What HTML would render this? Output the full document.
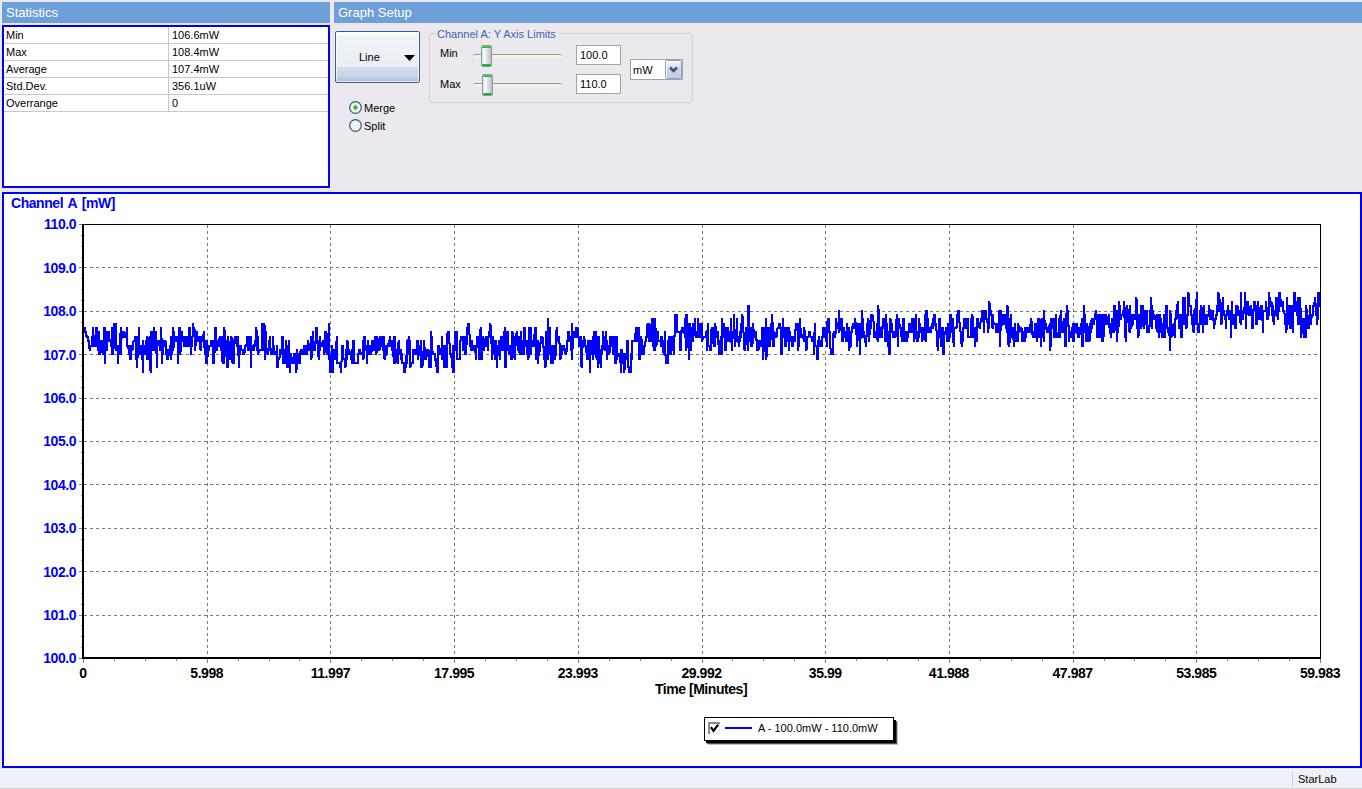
<!DOCTYPE html>
<html><head><meta charset="utf-8">
<style>
*{margin:0;padding:0;box-sizing:border-box}
html,body{width:1362px;height:789px;overflow:hidden;background:#ebe9ed;font-family:"Liberation Sans",sans-serif;position:relative}
.abs{position:absolute}
.hdr{position:absolute;top:2px;height:21px;background:#6d9fd8;color:#fff;font-size:13px;line-height:21px;padding-left:4px;white-space:nowrap}
.cream{position:absolute;background:#fbf8ee}
.stats{position:absolute;left:2px;top:25px;width:328px;height:163px;border:2px solid #0000ff;background:#fff}
.row{position:absolute;left:0;width:324px;height:17px;border-bottom:1px solid #c8c8c8;font-size:11px;color:#000}
.row span{position:absolute;top:2px;white-space:nowrap}
.vsep{position:absolute;left:164px;top:0;width:1px;height:84px;background:#c8c8c8}
.txt{position:absolute;white-space:nowrap;font-size:11px;color:#000;line-height:13px}
.chart{position:absolute;left:2px;top:192px;width:1360px;height:576px;border:2px solid #0000ff;background:#fff}
.status{position:absolute;left:0;top:768px;width:1362px;height:21px;background:#eef1f7;border-top:1px solid #e9ebe3}
</style></head><body>
<!-- cream outlines -->
<div class="hdr" style="left:2px;width:328px">Statistics</div>
<div class="hdr" style="left:334px;width:1028px">Graph Setup</div>

<div class="stats">
  <div class="row" style="top:0"><span style="left:2px">Min</span><span style="left:168px">106.6mW</span></div>
  <div class="row" style="top:17px"><span style="left:2px">Max</span><span style="left:168px">108.4mW</span></div>
  <div class="row" style="top:34px"><span style="left:2px">Average</span><span style="left:168px">107.4mW</span></div>
  <div class="row" style="top:51px"><span style="left:2px">Std.Dev.</span><span style="left:168px">356.1uW</span></div>
  <div class="row" style="top:68px"><span style="left:2px">Overrange</span><span style="left:168px">0</span></div>
  <div class="vsep"></div>
</div>

<!-- Graph setup controls -->
<div class="abs" style="left:335px;top:31px;width:85px;height:52px;border:1px solid #3b5e8e;border-radius:2px;box-shadow:inset 0 0 0 1px rgba(255,255,255,0.7);background:linear-gradient(#ffffff 0%,#f0f4f8 10%,#e8eef5 70%,#d2ddeb 71%,#c8d5e6 88%,#a9bcd6 100%)"></div>
<div class="txt" style="left:359px;top:51px">Line</div>
<svg class="abs" style="left:404px;top:55px" width="11" height="6"><path d="M0 0H11L5.5 6Z" fill="#000"/></svg>

<!-- radios -->
<svg class="abs" style="left:349px;top:101px" width="13" height="13"><circle cx="6.5" cy="6.5" r="5.8" fill="#f4f4f0" stroke="#2a5a8c" stroke-width="1.2"/><path d="M6.5 3.8L9.2 6.5L6.5 9.2L3.8 6.5Z" fill="#34b834"/></svg>
<div class="txt" style="left:364px;top:102px">Merge</div>
<svg class="abs" style="left:349px;top:119px" width="13" height="13"><circle cx="6.5" cy="6.5" r="5.8" fill="#f1f1ee" stroke="#2a5a8c" stroke-width="1.2"/></svg>
<div class="txt" style="left:364px;top:120px">Split</div>

<!-- group box -->
<div class="abs" style="left:429px;top:33px;width:264px;height:70px;border:1px solid #d3d1d6;border-radius:3px"></div>
<div class="txt" style="left:435px;top:28px;background:#ebe9ed;color:#3c64b4;padding:0 2px">Channel A: Y Axis Limits</div>
<div class="txt" style="left:440px;top:47px">Min</div>
<div class="txt" style="left:440px;top:78px">Max</div>
<!-- slider tracks -->
<div class="abs" style="left:473px;top:54px;width:89px;height:4px;border-top:1px solid #9d9b90;background:#f4f2e6;border-radius:2px"></div>
<div class="abs" style="left:473px;top:83px;width:89px;height:4px;border-top:1px solid #9d9b90;background:#f4f2e6;border-radius:2px"></div>
<div class="abs" style="left:481px;top:45px;width:11px;height:22px;border:1px solid #8a9aac;border-radius:2px;background:linear-gradient(90deg,#d8dae4 0%,#ffffff 25%,#e4e4ec 50%,#c8c8d6 85%,#b8bccc 100%)"><div class="abs" style="left:0;top:0;width:9px;height:2px;border-radius:1px;background:linear-gradient(#5ad85a,#1fb01f)"></div><div class="abs" style="left:0;bottom:0;width:9px;height:2px;border-radius:1px;background:linear-gradient(#2cc82c,#10a010)"></div></div>
<div class="abs" style="left:482px;top:74px;width:11px;height:22px;border:1px solid #8a9aac;border-radius:2px;background:linear-gradient(90deg,#d8dae4 0%,#ffffff 25%,#e4e4ec 50%,#c8c8d6 85%,#b8bccc 100%)"><div class="abs" style="left:0;top:0;width:9px;height:2px;border-radius:1px;background:linear-gradient(#5ad85a,#1fb01f)"></div><div class="abs" style="left:0;bottom:0;width:9px;height:2px;border-radius:1px;background:linear-gradient(#2cc82c,#10a010)"></div></div>
<!-- text boxes -->
<div class="abs" style="left:576px;top:45px;width:45px;height:20px;border:1px solid #a4a4a8;background:#fff"></div>
<div class="txt" style="left:580px;top:49px">100.0</div>
<div class="abs" style="left:576px;top:74px;width:45px;height:20px;border:1px solid #a4a4a8;background:#fff"></div>
<div class="txt" style="left:580px;top:78px">110.0</div>
<!-- dropdown -->
<div class="abs" style="left:630px;top:59px;width:53px;height:21px;border:1px solid #a3a3a3;background:#fff"></div>
<div class="abs" style="left:665px;top:60px;width:17px;height:19px;border:1px solid #8fa3c0;border-radius:2px;background:linear-gradient(#f6f9ff 0%,#e2ecf9 20%,#c6d7ee 45%,#bccfe8 100%);box-shadow:inset 1px 1px 0 #fff"></div>
<svg class="abs" style="left:668px;top:65px" width="12" height="10"><path d="M2 2.5L5.5 6L9 2.5" fill="none" stroke="#4b515c" stroke-width="2.6"/></svg>
<div class="txt" style="left:633px;top:64px">mW</div>

<!-- chart panel -->
<div class="chart"></div>
<svg class="abs" style="left:0;top:0" width="1362" height="789">
<line x1="84" y1="267.5" x2="1320" y2="267.5" stroke="#7a7a7a" stroke-width="1" stroke-dasharray="3 3" shape-rendering="crispEdges"/>
<line x1="84" y1="311.5" x2="1320" y2="311.5" stroke="#7a7a7a" stroke-width="1" stroke-dasharray="3 3" shape-rendering="crispEdges"/>
<line x1="84" y1="354.5" x2="1320" y2="354.5" stroke="#7a7a7a" stroke-width="1" stroke-dasharray="3 3" shape-rendering="crispEdges"/>
<line x1="84" y1="398.5" x2="1320" y2="398.5" stroke="#7a7a7a" stroke-width="1" stroke-dasharray="3 3" shape-rendering="crispEdges"/>
<line x1="84" y1="441.5" x2="1320" y2="441.5" stroke="#7a7a7a" stroke-width="1" stroke-dasharray="3 3" shape-rendering="crispEdges"/>
<line x1="84" y1="484.5" x2="1320" y2="484.5" stroke="#7a7a7a" stroke-width="1" stroke-dasharray="3 3" shape-rendering="crispEdges"/>
<line x1="84" y1="528.5" x2="1320" y2="528.5" stroke="#7a7a7a" stroke-width="1" stroke-dasharray="3 3" shape-rendering="crispEdges"/>
<line x1="84" y1="571.5" x2="1320" y2="571.5" stroke="#7a7a7a" stroke-width="1" stroke-dasharray="3 3" shape-rendering="crispEdges"/>
<line x1="84" y1="615.5" x2="1320" y2="615.5" stroke="#7a7a7a" stroke-width="1" stroke-dasharray="3 3" shape-rendering="crispEdges"/>
<line x1="207.5" y1="225" x2="207.5" y2="657" stroke="#7a7a7a" stroke-width="1" stroke-dasharray="3 3" shape-rendering="crispEdges"/>
<line x1="330.5" y1="225" x2="330.5" y2="657" stroke="#7a7a7a" stroke-width="1" stroke-dasharray="3 3" shape-rendering="crispEdges"/>
<line x1="454.5" y1="225" x2="454.5" y2="657" stroke="#7a7a7a" stroke-width="1" stroke-dasharray="3 3" shape-rendering="crispEdges"/>
<line x1="578.5" y1="225" x2="578.5" y2="657" stroke="#7a7a7a" stroke-width="1" stroke-dasharray="3 3" shape-rendering="crispEdges"/>
<line x1="702.5" y1="225" x2="702.5" y2="657" stroke="#7a7a7a" stroke-width="1" stroke-dasharray="3 3" shape-rendering="crispEdges"/>
<line x1="825.5" y1="225" x2="825.5" y2="657" stroke="#7a7a7a" stroke-width="1" stroke-dasharray="3 3" shape-rendering="crispEdges"/>
<line x1="949.5" y1="225" x2="949.5" y2="657" stroke="#7a7a7a" stroke-width="1" stroke-dasharray="3 3" shape-rendering="crispEdges"/>
<line x1="1073.5" y1="225" x2="1073.5" y2="657" stroke="#7a7a7a" stroke-width="1" stroke-dasharray="3 3" shape-rendering="crispEdges"/>
<line x1="1196.5" y1="225" x2="1196.5" y2="657" stroke="#7a7a7a" stroke-width="1" stroke-dasharray="3 3" shape-rendering="crispEdges"/>
<path d="M84 327h1v6h-1zM85 327h1v10h-1zM86 331h1v7h-1zM87 335h1v7h-1zM88 336h1v13h-1zM89 340h1v11h-1zM90 345h1v6h-1zM91 336h1v11h-1zM92 327h1v20h-1zM93 327h1v20h-1zM94 335h1v12h-1zM95 327h1v20h-1zM96 327h1v20h-1zM97 327h1v24h-1zM98 331h1v24h-1zM99 331h1v24h-1zM100 340h1v15h-1zM101 340h1v13h-1zM102 340h1v15h-1zM103 327h1v28h-1zM104 327h1v37h-1zM105 327h1v37h-1zM106 331h1v20h-1zM107 331h1v20h-1zM108 331h1v11h-1zM109 331h1v11h-1zM110 339h1v8h-1zM111 327h1v28h-1zM112 327h1v28h-1zM113 323h1v32h-1zM114 323h1v26h-1zM115 323h1v28h-1zM116 323h1v28h-1zM117 345h1v19h-1zM118 345h1v19h-1zM119 333h1v22h-1zM120 327h1v28h-1zM121 327h1v28h-1zM122 331h1v8h-1zM123 331h1v7h-1zM124 331h1v7h-1zM125 332h1v6h-1zM126 327h1v20h-1zM127 327h1v22h-1zM128 345h1v10h-1zM129 345h1v15h-1zM130 345h1v15h-1zM131 345h1v15h-1zM132 341h1v10h-1zM133 340h1v10h-1zM134 336h1v6h-1zM135 336h1v24h-1zM136 336h1v32h-1zM137 336h1v32h-1zM138 327h1v31h-1zM139 327h1v28h-1zM140 345h1v10h-1zM141 345h1v15h-1zM142 340h1v33h-1zM143 340h1v33h-1zM144 345h1v10h-1zM145 340h1v15h-1zM146 336h1v24h-1zM147 336h1v24h-1zM148 337h1v23h-1zM149 336h1v35h-1zM150 331h1v42h-1zM151 331h1v42h-1zM152 331h1v20h-1zM153 327h1v24h-1zM154 327h1v24h-1zM155 331h1v23h-1zM156 331h1v37h-1zM157 340h1v28h-1zM158 340h1v6h-1zM159 340h1v11h-1zM160 327h1v24h-1zM161 327h1v37h-1zM162 338h1v26h-1zM163 340h1v15h-1zM164 340h1v7h-1zM165 340h1v15h-1zM166 341h1v19h-1zM167 349h1v11h-1zM168 349h1v11h-1zM169 345h1v11h-1zM170 336h1v24h-1zM171 336h1v24h-1zM172 327h1v28h-1zM173 327h1v24h-1zM174 331h1v17h-1zM175 336h1v6h-1zM176 336h1v6h-1zM177 336h1v28h-1zM178 327h1v37h-1zM179 327h1v28h-1zM180 327h1v28h-1zM181 331h1v21h-1zM182 331h1v11h-1zM183 336h1v11h-1zM184 336h1v11h-1zM185 336h1v11h-1zM186 336h1v11h-1zM187 336h1v11h-1zM188 327h1v20h-1zM189 327h1v20h-1zM190 327h1v28h-1zM191 336h1v19h-1zM192 323h1v24h-1zM193 323h1v14h-1zM194 327h1v24h-1zM195 329h1v22h-1zM196 331h1v15h-1zM197 331h1v11h-1zM198 336h1v6h-1zM199 336h1v14h-1zM200 336h1v15h-1zM201 336h1v15h-1zM202 334h1v8h-1zM203 331h1v17h-1zM204 331h1v24h-1zM205 340h1v24h-1zM206 340h1v24h-1zM207 340h1v24h-1zM208 345h1v12h-1zM209 345h1v6h-1zM210 340h1v7h-1zM211 340h1v7h-1zM212 340h1v24h-1zM213 340h1v24h-1zM214 327h1v37h-1zM215 327h1v26h-1zM216 327h1v24h-1zM217 340h1v11h-1zM218 338h1v9h-1zM219 336h1v11h-1zM220 336h1v15h-1zM221 336h1v26h-1zM222 336h1v28h-1zM223 327h1v37h-1zM224 327h1v37h-1zM225 330h1v27h-1zM226 340h1v28h-1zM227 336h1v32h-1zM228 336h1v32h-1zM229 341h1v19h-1zM230 336h1v24h-1zM231 336h1v27h-1zM232 337h1v27h-1zM233 339h1v25h-1zM234 336h1v28h-1zM235 336h1v8h-1zM236 336h1v11h-1zM237 336h1v20h-1zM238 336h1v32h-1zM239 345h1v23h-1zM240 345h1v10h-1zM241 345h1v6h-1zM242 349h1v6h-1zM243 349h1v6h-1zM244 345h1v10h-1zM245 344h1v9h-1zM246 336h1v11h-1zM247 336h1v15h-1zM248 336h1v15h-1zM249 336h1v15h-1zM250 336h1v32h-1zM251 336h1v32h-1zM252 345h1v6h-1zM253 344h1v7h-1zM254 340h1v11h-1zM255 327h1v20h-1zM256 327h1v24h-1zM257 330h1v25h-1zM258 336h1v19h-1zM259 349h1v4h-1zM260 349h1v2h-1zM261 323h1v28h-1zM262 323h1v28h-1zM263 323h1v28h-1zM264 323h1v37h-1zM265 325h1v35h-1zM266 331h1v23h-1zM267 348h1v7h-1zM268 340h1v15h-1zM269 336h1v15h-1zM270 336h1v19h-1zM271 348h1v7h-1zM272 336h1v19h-1zM273 336h1v19h-1zM274 345h1v10h-1zM275 351h1v4h-1zM276 345h1v23h-1zM277 345h1v23h-1zM278 357h1v11h-1zM279 349h1v11h-1zM280 349h1v9h-1zM281 336h1v19h-1zM282 336h1v28h-1zM283 336h1v28h-1zM284 349h1v15h-1zM285 340h1v24h-1zM286 340h1v28h-1zM287 345h1v23h-1zM288 340h1v28h-1zM289 340h1v33h-1zM290 353h1v20h-1zM291 353h1v11h-1zM292 357h1v7h-1zM293 353h1v11h-1zM294 353h1v11h-1zM295 353h1v20h-1zM296 349h1v24h-1zM297 349h1v21h-1zM298 353h1v11h-1zM299 351h1v13h-1zM300 349h1v15h-1zM301 349h1v6h-1zM302 349h1v6h-1zM303 345h1v10h-1zM304 345h1v10h-1zM305 345h1v10h-1zM306 345h1v10h-1zM307 340h1v15h-1zM308 340h1v11h-1zM309 343h1v8h-1zM310 336h1v24h-1zM311 336h1v24h-1zM312 331h1v27h-1zM313 331h1v20h-1zM314 341h1v10h-1zM315 327h1v24h-1zM316 327h1v17h-1zM317 327h1v30h-1zM318 340h1v20h-1zM319 336h1v24h-1zM320 336h1v15h-1zM321 342h1v5h-1zM322 340h1v7h-1zM323 340h1v15h-1zM324 331h1v24h-1zM325 331h1v22h-1zM326 331h1v24h-1zM327 333h1v22h-1zM328 323h1v37h-1zM329 323h1v50h-1zM330 354h1v19h-1zM331 345h1v28h-1zM332 345h1v28h-1zM333 349h1v24h-1zM334 349h1v11h-1zM335 341h1v19h-1zM336 336h1v28h-1zM337 336h1v28h-1zM338 362h1v2h-1zM339 362h1v6h-1zM340 361h1v12h-1zM341 345h1v28h-1zM342 345h1v17h-1zM343 345h1v15h-1zM344 358h1v10h-1zM345 349h1v19h-1zM346 340h1v27h-1zM347 340h1v20h-1zM348 341h1v14h-1zM349 349h1v6h-1zM350 351h1v9h-1zM351 349h1v15h-1zM352 340h1v24h-1zM353 340h1v24h-1zM354 340h1v24h-1zM355 362h1v2h-1zM356 362h1v2h-1zM357 353h1v11h-1zM358 349h1v15h-1zM359 349h1v6h-1zM360 349h1v6h-1zM361 352h1v3h-1zM362 340h1v20h-1zM363 336h1v24h-1zM364 336h1v23h-1zM365 336h1v15h-1zM366 345h1v19h-1zM367 340h1v24h-1zM368 340h1v15h-1zM369 345h1v10h-1zM370 345h1v10h-1zM371 340h1v15h-1zM372 340h1v12h-1zM373 340h1v11h-1zM374 336h1v15h-1zM375 336h1v19h-1zM376 336h1v19h-1zM377 336h1v17h-1zM378 338h1v13h-1zM379 336h1v15h-1zM380 336h1v14h-1zM381 336h1v11h-1zM382 336h1v15h-1zM383 336h1v23h-1zM384 336h1v24h-1zM385 345h1v15h-1zM386 345h1v11h-1zM387 343h1v12h-1zM388 340h1v7h-1zM389 336h1v11h-1zM390 336h1v11h-1zM391 340h1v11h-1zM392 340h1v17h-1zM393 336h1v28h-1zM394 336h1v28h-1zM395 336h1v28h-1zM396 349h1v14h-1zM397 342h1v22h-1zM398 340h1v24h-1zM399 340h1v15h-1zM400 349h1v11h-1zM401 349h1v15h-1zM402 353h1v11h-1zM403 362h1v11h-1zM404 362h1v11h-1zM405 355h1v18h-1zM406 340h1v28h-1zM407 339h1v25h-1zM408 336h1v19h-1zM409 336h1v32h-1zM410 340h1v28h-1zM411 362h1v5h-1zM412 349h1v15h-1zM413 349h1v15h-1zM414 349h1v6h-1zM415 349h1v6h-1zM416 340h1v15h-1zM417 340h1v20h-1zM418 340h1v20h-1zM419 345h1v11h-1zM420 340h1v28h-1zM421 340h1v28h-1zM422 351h1v17h-1zM423 340h1v26h-1zM424 340h1v20h-1zM425 347h1v13h-1zM426 349h1v11h-1zM427 349h1v8h-1zM428 349h1v19h-1zM429 350h1v18h-1zM430 331h1v37h-1zM431 331h1v37h-1zM432 336h1v19h-1zM433 351h1v4h-1zM434 353h1v8h-1zM435 353h1v14h-1zM436 358h1v15h-1zM437 345h1v28h-1zM438 345h1v28h-1zM439 345h1v10h-1zM440 348h1v7h-1zM441 336h1v24h-1zM442 336h1v24h-1zM443 345h1v23h-1zM444 345h1v23h-1zM445 345h1v23h-1zM446 333h1v35h-1zM447 331h1v37h-1zM448 331h1v13h-1zM449 331h1v24h-1zM450 343h1v15h-1zM451 353h1v15h-1zM452 345h1v28h-1zM453 345h1v28h-1zM454 331h1v42h-1zM455 331h1v20h-1zM456 331h1v29h-1zM457 331h1v29h-1zM458 358h1v2h-1zM459 340h1v20h-1zM460 336h1v24h-1zM461 336h1v5h-1zM462 336h1v15h-1zM463 336h1v15h-1zM464 336h1v19h-1zM465 336h1v19h-1zM466 327h1v28h-1zM467 323h1v22h-1zM468 323h1v12h-1zM469 323h1v24h-1zM470 334h1v17h-1zM471 340h1v11h-1zM472 340h1v11h-1zM473 345h1v6h-1zM474 345h1v8h-1zM475 345h1v15h-1zM476 336h1v24h-1zM477 336h1v12h-1zM478 336h1v24h-1zM479 329h1v31h-1zM480 327h1v33h-1zM481 327h1v33h-1zM482 336h1v24h-1zM483 336h1v15h-1zM484 338h1v13h-1zM485 336h1v11h-1zM486 336h1v11h-1zM487 336h1v15h-1zM488 331h1v20h-1zM489 323h1v15h-1zM490 323h1v21h-1zM491 325h1v35h-1zM492 336h1v24h-1zM493 336h1v18h-1zM494 340h1v20h-1zM495 340h1v20h-1zM496 340h1v28h-1zM497 345h1v23h-1zM498 340h1v16h-1zM499 340h1v20h-1zM500 336h1v24h-1zM501 336h1v15h-1zM502 336h1v15h-1zM503 331h1v20h-1zM504 327h1v41h-1zM505 327h1v41h-1zM506 331h1v37h-1zM507 331h1v20h-1zM508 331h1v24h-1zM509 345h1v10h-1zM510 345h1v15h-1zM511 331h1v29h-1zM512 331h1v29h-1zM513 332h1v26h-1zM514 336h1v24h-1zM515 333h1v27h-1zM516 331h1v15h-1zM517 331h1v20h-1zM518 336h1v17h-1zM519 336h1v19h-1zM520 331h1v24h-1zM521 331h1v24h-1zM522 340h1v15h-1zM523 327h1v28h-1zM524 327h1v28h-1zM525 327h1v20h-1zM526 340h1v15h-1zM527 340h1v20h-1zM528 327h1v33h-1zM529 327h1v31h-1zM530 327h1v28h-1zM531 327h1v28h-1zM532 340h1v7h-1zM533 334h1v13h-1zM534 327h1v20h-1zM535 327h1v33h-1zM536 327h1v33h-1zM537 340h1v24h-1zM538 340h1v24h-1zM539 342h1v14h-1zM540 336h1v16h-1zM541 336h1v8h-1zM542 336h1v12h-1zM543 337h1v23h-1zM544 346h1v22h-1zM545 331h1v37h-1zM546 331h1v36h-1zM547 318h1v42h-1zM548 318h1v42h-1zM549 327h1v28h-1zM550 327h1v37h-1zM551 345h1v19h-1zM552 345h1v19h-1zM553 345h1v19h-1zM554 345h1v15h-1zM555 330h1v30h-1zM556 327h1v29h-1zM557 327h1v15h-1zM558 336h1v8h-1zM559 336h1v24h-1zM560 343h1v17h-1zM561 345h1v14h-1zM562 345h1v10h-1zM563 345h1v6h-1zM564 345h1v9h-1zM565 348h1v7h-1zM566 340h1v15h-1zM567 331h1v21h-1zM568 331h1v11h-1zM569 331h1v11h-1zM570 336h1v15h-1zM571 323h1v37h-1zM572 323h1v37h-1zM573 331h1v18h-1zM574 331h1v7h-1zM575 327h1v11h-1zM576 327h1v11h-1zM577 327h1v11h-1zM578 328h1v19h-1zM579 336h1v11h-1zM580 336h1v31h-1zM581 336h1v32h-1zM582 340h1v28h-1zM583 336h1v12h-1zM584 336h1v11h-1zM585 339h1v14h-1zM586 345h1v15h-1zM587 340h1v20h-1zM588 340h1v20h-1zM589 340h1v33h-1zM590 340h1v33h-1zM591 340h1v15h-1zM592 336h1v24h-1zM593 331h1v29h-1zM594 331h1v24h-1zM595 331h1v27h-1zM596 331h1v29h-1zM597 336h1v32h-1zM598 336h1v32h-1zM599 336h1v28h-1zM600 349h1v19h-1zM601 345h1v23h-1zM602 331h1v24h-1zM603 331h1v19h-1zM604 336h1v15h-1zM605 331h1v20h-1zM606 331h1v29h-1zM607 340h1v20h-1zM608 345h1v10h-1zM609 336h1v19h-1zM610 336h1v17h-1zM611 336h1v11h-1zM612 336h1v19h-1zM613 336h1v19h-1zM614 336h1v28h-1zM615 336h1v28h-1zM616 336h1v28h-1zM617 336h1v24h-1zM618 353h1v4h-1zM619 353h1v10h-1zM620 349h1v24h-1zM621 349h1v24h-1zM622 349h1v15h-1zM623 353h1v20h-1zM624 353h1v20h-1zM625 353h1v17h-1zM626 340h1v20h-1zM627 340h1v28h-1zM628 340h1v33h-1zM629 366h1v7h-1zM630 353h1v20h-1zM631 340h1v33h-1zM632 340h1v20h-1zM633 340h1v2h-1zM634 333h1v9h-1zM635 327h1v15h-1zM636 327h1v15h-1zM637 327h1v15h-1zM638 327h1v33h-1zM639 327h1v33h-1zM640 336h1v24h-1zM641 336h1v19h-1zM642 339h1v16h-1zM643 345h1v10h-1zM644 341h1v14h-1zM645 336h1v11h-1zM646 324h1v18h-1zM647 323h1v15h-1zM648 323h1v19h-1zM649 323h1v19h-1zM650 324h1v18h-1zM651 318h1v24h-1zM652 318h1v29h-1zM653 318h1v33h-1zM654 318h1v33h-1zM655 318h1v33h-1zM656 328h1v19h-1zM657 331h1v14h-1zM658 331h1v11h-1zM659 340h1v2h-1zM660 336h1v11h-1zM661 336h1v11h-1zM662 336h1v17h-1zM663 340h1v15h-1zM664 331h1v25h-1zM665 331h1v33h-1zM666 354h1v10h-1zM667 340h1v24h-1zM668 336h1v28h-1zM669 336h1v19h-1zM670 336h1v19h-1zM671 336h1v19h-1zM672 336h1v15h-1zM673 335h1v20h-1zM674 314h1v41h-1zM675 314h1v23h-1zM676 314h1v19h-1zM677 314h1v19h-1zM678 331h1v2h-1zM679 331h1v20h-1zM680 330h1v21h-1zM681 327h1v24h-1zM682 327h1v6h-1zM683 327h1v7h-1zM684 318h1v20h-1zM685 314h1v37h-1zM686 314h1v37h-1zM687 314h1v34h-1zM688 323h1v37h-1zM689 323h1v37h-1zM690 323h1v28h-1zM691 327h1v24h-1zM692 323h1v19h-1zM693 323h1v19h-1zM694 318h1v18h-1zM695 318h1v20h-1zM696 331h1v7h-1zM697 318h1v20h-1zM698 318h1v20h-1zM699 323h1v15h-1zM700 323h1v15h-1zM701 323h1v19h-1zM702 323h1v19h-1zM703 336h1v4h-1zM704 336h1v2h-1zM705 331h1v7h-1zM706 330h1v21h-1zM707 323h1v28h-1zM708 323h1v24h-1zM709 345h1v6h-1zM710 329h1v22h-1zM711 327h1v24h-1zM712 327h1v17h-1zM713 327h1v20h-1zM714 323h1v24h-1zM715 323h1v24h-1zM716 326h1v12h-1zM717 331h1v14h-1zM718 331h1v24h-1zM719 340h1v15h-1zM720 336h1v19h-1zM721 318h1v37h-1zM722 318h1v37h-1zM723 323h1v15h-1zM724 323h1v28h-1zM725 327h1v24h-1zM726 327h1v24h-1zM727 327h1v15h-1zM728 327h1v15h-1zM729 331h1v11h-1zM730 318h1v25h-1zM731 318h1v33h-1zM732 331h1v20h-1zM733 314h1v25h-1zM734 314h1v33h-1zM735 329h1v18h-1zM736 318h1v24h-1zM737 318h1v25h-1zM738 336h1v11h-1zM739 331h1v16h-1zM740 323h1v19h-1zM741 314h1v24h-1zM742 314h1v19h-1zM743 316h1v34h-1zM744 332h1v19h-1zM745 327h1v24h-1zM746 327h1v18h-1zM747 305h1v46h-1zM748 305h1v46h-1zM749 305h1v37h-1zM750 327h1v20h-1zM751 327h1v20h-1zM752 323h1v24h-1zM753 323h1v21h-1zM754 329h1v9h-1zM755 331h1v10h-1zM756 331h1v20h-1zM757 339h1v12h-1zM758 340h1v11h-1zM759 340h1v10h-1zM760 340h1v7h-1zM761 327h1v20h-1zM762 327h1v33h-1zM763 327h1v33h-1zM764 327h1v25h-1zM765 318h1v42h-1zM766 318h1v42h-1zM767 327h1v30h-1zM768 327h1v20h-1zM769 327h1v20h-1zM770 323h1v24h-1zM771 314h1v26h-1zM772 314h1v33h-1zM773 322h1v25h-1zM774 331h1v16h-1zM775 332h1v6h-1zM776 328h1v10h-1zM777 327h1v10h-1zM778 323h1v6h-1zM779 323h1v6h-1zM780 323h1v32h-1zM781 327h1v28h-1zM782 318h1v37h-1zM783 318h1v20h-1zM784 327h1v20h-1zM785 327h1v20h-1zM786 327h1v20h-1zM787 327h1v15h-1zM788 327h1v24h-1zM789 327h1v24h-1zM790 331h1v11h-1zM791 336h1v11h-1zM792 336h1v11h-1zM793 336h1v11h-1zM794 329h1v13h-1zM795 323h1v19h-1zM796 323h1v8h-1zM797 323h1v28h-1zM798 323h1v28h-1zM799 318h1v29h-1zM800 318h1v20h-1zM801 328h1v10h-1zM802 334h1v5h-1zM803 327h1v15h-1zM804 327h1v15h-1zM805 330h1v21h-1zM806 336h1v15h-1zM807 336h1v14h-1zM808 331h1v7h-1zM809 331h1v6h-1zM810 331h1v7h-1zM811 336h1v6h-1zM812 336h1v6h-1zM813 332h1v23h-1zM814 323h1v32h-1zM815 323h1v24h-1zM816 345h1v15h-1zM817 340h1v20h-1zM818 336h1v24h-1zM819 336h1v11h-1zM820 340h1v7h-1zM821 336h1v11h-1zM822 327h1v20h-1zM823 327h1v11h-1zM824 327h1v11h-1zM825 327h1v15h-1zM826 321h1v26h-1zM827 318h1v29h-1zM828 318h1v15h-1zM829 318h1v31h-1zM830 331h1v24h-1zM831 348h1v7h-1zM832 333h1v22h-1zM833 331h1v24h-1zM834 331h1v7h-1zM835 318h1v20h-1zM836 318h1v16h-1zM837 322h1v7h-1zM838 310h1v23h-1zM839 310h1v23h-1zM840 318h1v13h-1zM841 318h1v24h-1zM842 318h1v24h-1zM843 327h1v15h-1zM844 327h1v11h-1zM845 331h1v11h-1zM846 323h1v19h-1zM847 323h1v19h-1zM848 327h1v24h-1zM849 327h1v24h-1zM850 331h1v17h-1zM851 326h1v21h-1zM852 323h1v10h-1zM853 323h1v6h-1zM854 318h1v11h-1zM855 318h1v17h-1zM856 322h1v25h-1zM857 323h1v24h-1zM858 323h1v18h-1zM859 323h1v32h-1zM860 323h1v32h-1zM861 310h1v29h-1zM862 310h1v28h-1zM863 318h1v20h-1zM864 331h1v12h-1zM865 335h1v12h-1zM866 323h1v24h-1zM867 318h1v19h-1zM868 318h1v24h-1zM869 320h1v22h-1zM870 314h1v21h-1zM871 314h1v15h-1zM872 314h1v8h-1zM873 315h1v23h-1zM874 321h1v17h-1zM875 331h1v7h-1zM876 323h1v17h-1zM877 305h1v37h-1zM878 305h1v37h-1zM879 309h1v29h-1zM880 327h1v11h-1zM881 326h1v12h-1zM882 318h1v20h-1zM883 318h1v11h-1zM884 318h1v24h-1zM885 314h1v28h-1zM886 314h1v28h-1zM887 323h1v24h-1zM888 331h1v24h-1zM889 318h1v37h-1zM890 318h1v37h-1zM891 319h1v14h-1zM892 323h1v15h-1zM893 331h1v7h-1zM894 331h1v7h-1zM895 319h1v19h-1zM896 314h1v23h-1zM897 314h1v33h-1zM898 318h1v29h-1zM899 318h1v11h-1zM900 324h1v13h-1zM901 327h1v15h-1zM902 318h1v24h-1zM903 318h1v24h-1zM904 318h1v24h-1zM905 331h1v11h-1zM906 331h1v11h-1zM907 331h1v11h-1zM908 323h1v15h-1zM909 323h1v10h-1zM910 323h1v10h-1zM911 318h1v15h-1zM912 318h1v15h-1zM913 318h1v24h-1zM914 318h1v24h-1zM915 314h1v25h-1zM916 314h1v28h-1zM917 331h1v11h-1zM918 318h1v24h-1zM919 318h1v20h-1zM920 323h1v10h-1zM921 327h1v15h-1zM922 327h1v15h-1zM923 327h1v13h-1zM924 314h1v27h-1zM925 310h1v32h-1zM926 310h1v32h-1zM927 310h1v23h-1zM928 318h1v15h-1zM929 327h1v6h-1zM930 326h1v7h-1zM931 323h1v10h-1zM932 318h1v11h-1zM933 314h1v15h-1zM934 314h1v12h-1zM935 314h1v17h-1zM936 323h1v24h-1zM937 330h1v21h-1zM938 318h1v33h-1zM939 318h1v20h-1zM940 318h1v29h-1zM941 327h1v20h-1zM942 327h1v28h-1zM943 327h1v28h-1zM944 331h1v24h-1zM945 327h1v8h-1zM946 327h1v15h-1zM947 323h1v19h-1zM948 323h1v19h-1zM949 314h1v28h-1zM950 314h1v24h-1zM951 314h1v19h-1zM952 318h1v25h-1zM953 318h1v29h-1zM954 327h1v20h-1zM955 326h1v3h-1zM956 314h1v15h-1zM957 310h1v18h-1zM958 310h1v13h-1zM959 310h1v22h-1zM960 322h1v22h-1zM961 331h1v16h-1zM962 327h1v20h-1zM963 318h1v24h-1zM964 318h1v11h-1zM965 318h1v11h-1zM966 318h1v11h-1zM967 318h1v20h-1zM968 318h1v20h-1zM969 336h1v2h-1zM970 318h1v20h-1zM971 314h1v24h-1zM972 314h1v24h-1zM973 316h1v22h-1zM974 327h1v20h-1zM975 327h1v20h-1zM976 318h1v24h-1zM977 318h1v24h-1zM978 318h1v10h-1zM979 322h1v7h-1zM980 318h1v11h-1zM981 310h1v13h-1zM982 310h1v12h-1zM983 310h1v23h-1zM984 310h1v23h-1zM985 310h1v10h-1zM986 310h1v13h-1zM987 318h1v15h-1zM988 301h1v32h-1zM989 301h1v28h-1zM990 303h1v13h-1zM991 310h1v18h-1zM992 314h1v15h-1zM993 314h1v15h-1zM994 322h1v3h-1zM995 323h1v10h-1zM996 323h1v10h-1zM997 323h1v10h-1zM998 310h1v23h-1zM999 310h1v37h-1zM1000 310h1v37h-1zM1001 310h1v21h-1zM1002 314h1v12h-1zM1003 314h1v11h-1zM1004 314h1v11h-1zM1005 314h1v15h-1zM1006 305h1v28h-1zM1007 305h1v40h-1zM1008 306h1v41h-1zM1009 318h1v29h-1zM1010 314h1v29h-1zM1011 314h1v24h-1zM1012 327h1v13h-1zM1013 327h1v20h-1zM1014 323h1v24h-1zM1015 323h1v19h-1zM1016 331h1v11h-1zM1017 323h1v19h-1zM1018 323h1v19h-1zM1019 325h1v8h-1zM1020 327h1v5h-1zM1021 327h1v15h-1zM1022 328h1v14h-1zM1023 331h1v11h-1zM1024 327h1v15h-1zM1025 327h1v15h-1zM1026 327h1v11h-1zM1027 327h1v6h-1zM1028 327h1v6h-1zM1029 324h1v9h-1zM1030 318h1v15h-1zM1031 318h1v17h-1zM1032 321h1v17h-1zM1033 331h1v7h-1zM1034 323h1v15h-1zM1035 323h1v15h-1zM1036 323h1v19h-1zM1037 318h1v24h-1zM1038 318h1v20h-1zM1039 318h1v20h-1zM1040 319h1v28h-1zM1041 318h1v29h-1zM1042 318h1v20h-1zM1043 310h1v32h-1zM1044 310h1v32h-1zM1045 320h1v10h-1zM1046 323h1v10h-1zM1047 327h1v6h-1zM1048 325h1v8h-1zM1049 323h1v28h-1zM1050 318h1v33h-1zM1051 318h1v29h-1zM1052 318h1v11h-1zM1053 318h1v20h-1zM1054 318h1v20h-1zM1055 314h1v24h-1zM1056 314h1v24h-1zM1057 332h1v6h-1zM1058 318h1v20h-1zM1059 315h1v23h-1zM1060 310h1v28h-1zM1061 310h1v23h-1zM1062 321h1v12h-1zM1063 318h1v15h-1zM1064 318h1v29h-1zM1065 313h1v34h-1zM1066 305h1v42h-1zM1067 305h1v22h-1zM1068 310h1v32h-1zM1069 325h1v17h-1zM1070 331h1v7h-1zM1071 327h1v11h-1zM1072 323h1v19h-1zM1073 323h1v19h-1zM1074 323h1v19h-1zM1075 323h1v10h-1zM1076 323h1v11h-1zM1077 323h1v15h-1zM1078 327h1v11h-1zM1079 327h1v11h-1zM1080 323h1v12h-1zM1081 318h1v29h-1zM1082 318h1v29h-1zM1083 305h1v42h-1zM1084 305h1v28h-1zM1085 314h1v28h-1zM1086 323h1v19h-1zM1087 323h1v19h-1zM1088 326h1v16h-1zM1089 323h1v19h-1zM1090 320h1v21h-1zM1091 318h1v15h-1zM1092 318h1v11h-1zM1093 318h1v7h-1zM1094 313h1v12h-1zM1095 310h1v10h-1zM1096 310h1v28h-1zM1097 314h1v24h-1zM1098 314h1v24h-1zM1099 314h1v24h-1zM1100 314h1v24h-1zM1101 314h1v28h-1zM1102 314h1v28h-1zM1103 314h1v28h-1zM1104 314h1v23h-1zM1105 314h1v11h-1zM1106 314h1v11h-1zM1107 316h1v9h-1zM1108 314h1v14h-1zM1109 314h1v20h-1zM1110 323h1v15h-1zM1111 318h1v20h-1zM1112 318h1v15h-1zM1113 305h1v28h-1zM1114 305h1v28h-1zM1115 305h1v26h-1zM1116 310h1v32h-1zM1117 310h1v32h-1zM1118 301h1v32h-1zM1119 301h1v26h-1zM1120 305h1v15h-1zM1121 314h1v6h-1zM1122 310h1v6h-1zM1123 301h1v17h-1zM1124 301h1v37h-1zM1125 307h1v35h-1zM1126 305h1v37h-1zM1127 305h1v18h-1zM1128 309h1v23h-1zM1129 305h1v28h-1zM1130 305h1v28h-1zM1131 314h1v15h-1zM1132 314h1v13h-1zM1133 314h1v11h-1zM1134 314h1v6h-1zM1135 297h1v23h-1zM1136 297h1v32h-1zM1137 299h1v39h-1zM1138 314h1v24h-1zM1139 314h1v22h-1zM1140 305h1v24h-1zM1141 305h1v24h-1zM1142 305h1v22h-1zM1143 305h1v24h-1zM1144 310h1v19h-1zM1145 310h1v15h-1zM1146 310h1v23h-1zM1147 310h1v23h-1zM1148 325h1v8h-1zM1149 310h1v23h-1zM1150 297h1v30h-1zM1151 297h1v32h-1zM1152 305h1v24h-1zM1153 310h1v10h-1zM1154 314h1v6h-1zM1155 315h1v14h-1zM1156 314h1v18h-1zM1157 314h1v19h-1zM1158 314h1v24h-1zM1159 314h1v24h-1zM1160 314h1v19h-1zM1161 318h1v20h-1zM1162 323h1v15h-1zM1163 314h1v24h-1zM1164 314h1v24h-1zM1165 305h1v33h-1zM1166 305h1v24h-1zM1167 305h1v28h-1zM1168 327h1v9h-1zM1169 310h1v41h-1zM1170 310h1v41h-1zM1171 313h1v25h-1zM1172 324h1v13h-1zM1173 323h1v13h-1zM1174 318h1v20h-1zM1175 310h1v28h-1zM1176 304h1v16h-1zM1177 301h1v18h-1zM1178 301h1v28h-1zM1179 314h1v15h-1zM1180 314h1v24h-1zM1181 314h1v24h-1zM1182 297h1v41h-1zM1183 297h1v28h-1zM1184 297h1v28h-1zM1185 297h1v32h-1zM1186 314h1v15h-1zM1187 292h1v36h-1zM1188 292h1v24h-1zM1189 293h1v14h-1zM1190 305h1v11h-1zM1191 305h1v20h-1zM1192 314h1v18h-1zM1193 310h1v23h-1zM1194 308h1v25h-1zM1195 299h1v26h-1zM1196 292h1v33h-1zM1197 292h1v41h-1zM1198 323h1v10h-1zM1199 310h1v23h-1zM1200 305h1v20h-1zM1201 305h1v20h-1zM1202 307h1v26h-1zM1203 305h1v28h-1zM1204 305h1v20h-1zM1205 314h1v11h-1zM1206 314h1v11h-1zM1207 314h1v11h-1zM1208 305h1v12h-1zM1209 305h1v15h-1zM1210 309h1v11h-1zM1211 310h1v10h-1zM1212 310h1v11h-1zM1213 310h1v19h-1zM1214 318h1v11h-1zM1215 314h1v11h-1zM1216 305h1v15h-1zM1217 292h1v24h-1zM1218 292h1v20h-1zM1219 293h1v19h-1zM1220 299h1v26h-1zM1221 302h1v23h-1zM1222 297h1v27h-1zM1223 297h1v19h-1zM1224 310h1v10h-1zM1225 314h1v15h-1zM1226 310h1v19h-1zM1227 305h1v11h-1zM1228 305h1v15h-1zM1229 310h1v10h-1zM1230 310h1v28h-1zM1231 301h1v37h-1zM1232 301h1v24h-1zM1233 314h1v11h-1zM1234 314h1v15h-1zM1235 305h1v24h-1zM1236 305h1v24h-1zM1237 305h1v11h-1zM1238 306h1v10h-1zM1239 310h1v13h-1zM1240 292h1v33h-1zM1241 292h1v33h-1zM1242 310h1v10h-1zM1243 307h1v13h-1zM1244 292h1v22h-1zM1245 292h1v37h-1zM1246 301h1v28h-1zM1247 301h1v14h-1zM1248 301h1v15h-1zM1249 306h1v10h-1zM1250 305h1v11h-1zM1251 305h1v24h-1zM1252 309h1v20h-1zM1253 301h1v28h-1zM1254 301h1v10h-1zM1255 301h1v24h-1zM1256 305h1v20h-1zM1257 301h1v24h-1zM1258 301h1v19h-1zM1259 307h1v13h-1zM1260 305h1v15h-1zM1261 305h1v16h-1zM1262 305h1v28h-1zM1263 310h1v23h-1zM1264 310h1v2h-1zM1265 301h1v11h-1zM1266 301h1v19h-1zM1267 307h1v13h-1zM1268 292h1v28h-1zM1269 292h1v24h-1zM1270 297h1v10h-1zM1271 301h1v15h-1zM1272 302h1v20h-1zM1273 305h1v20h-1zM1274 310h1v15h-1zM1275 297h1v19h-1zM1276 297h1v20h-1zM1277 297h1v23h-1zM1278 292h1v28h-1zM1279 292h1v20h-1zM1280 292h1v15h-1zM1281 299h1v8h-1zM1282 301h1v11h-1zM1283 301h1v13h-1zM1284 310h1v15h-1zM1285 313h1v20h-1zM1286 297h1v36h-1zM1287 297h1v33h-1zM1288 305h1v20h-1zM1289 305h1v24h-1zM1290 305h1v24h-1zM1291 305h1v24h-1zM1292 305h1v28h-1zM1293 292h1v41h-1zM1294 292h1v20h-1zM1295 292h1v20h-1zM1296 301h1v15h-1zM1297 297h1v28h-1zM1298 297h1v28h-1zM1299 297h1v28h-1zM1300 297h1v41h-1zM1301 308h1v30h-1zM1302 318h1v16h-1zM1303 318h1v20h-1zM1304 318h1v20h-1zM1305 305h1v33h-1zM1306 305h1v33h-1zM1307 309h1v20h-1zM1308 315h1v14h-1zM1309 305h1v24h-1zM1310 305h1v20h-1zM1311 314h1v11h-1zM1312 305h1v13h-1zM1313 302h1v14h-1zM1314 297h1v10h-1zM1315 297h1v19h-1zM1316 303h1v22h-1zM1317 292h1v33h-1zM1318 292h1v28h-1zM1319 292h1v15h-1zM1320 292h1v24h-1z" fill="#0000ff" shape-rendering="crispEdges"/>
<rect x="82" y="224" width="1" height="1" fill="#000"/>
<line x1="82" y1="224.5" x2="1321" y2="224.5" stroke="#000" stroke-width="1" shape-rendering="crispEdges"/>
<line x1="1320.5" y1="224" x2="1320.5" y2="659" stroke="#000" stroke-width="1" shape-rendering="crispEdges"/>
<rect x="82" y="224" width="2" height="435" fill="#000"/>
<rect x="82" y="657" width="1239" height="2" fill="#000"/>
<rect x="79" y="224" width="3" height="1" fill="#808080"/>
<rect x="81" y="235" width="1" height="1" fill="#808080"/>
<rect x="81" y="246" width="1" height="1" fill="#808080"/>
<rect x="81" y="257" width="1" height="1" fill="#808080"/>
<rect x="79" y="267" width="3" height="1" fill="#808080"/>
<rect x="81" y="278" width="1" height="1" fill="#808080"/>
<rect x="81" y="289" width="1" height="1" fill="#808080"/>
<rect x="81" y="300" width="1" height="1" fill="#808080"/>
<rect x="79" y="311" width="3" height="1" fill="#808080"/>
<rect x="81" y="322" width="1" height="1" fill="#808080"/>
<rect x="81" y="332" width="1" height="1" fill="#808080"/>
<rect x="81" y="343" width="1" height="1" fill="#808080"/>
<rect x="79" y="354" width="3" height="1" fill="#808080"/>
<rect x="81" y="365" width="1" height="1" fill="#808080"/>
<rect x="81" y="376" width="1" height="1" fill="#808080"/>
<rect x="81" y="387" width="1" height="1" fill="#808080"/>
<rect x="79" y="398" width="3" height="1" fill="#808080"/>
<rect x="81" y="408" width="1" height="1" fill="#808080"/>
<rect x="81" y="419" width="1" height="1" fill="#808080"/>
<rect x="81" y="430" width="1" height="1" fill="#808080"/>
<rect x="79" y="441" width="3" height="1" fill="#808080"/>
<rect x="81" y="452" width="1" height="1" fill="#808080"/>
<rect x="81" y="463" width="1" height="1" fill="#808080"/>
<rect x="81" y="474" width="1" height="1" fill="#808080"/>
<rect x="79" y="484" width="3" height="1" fill="#808080"/>
<rect x="81" y="495" width="1" height="1" fill="#808080"/>
<rect x="81" y="506" width="1" height="1" fill="#808080"/>
<rect x="81" y="517" width="1" height="1" fill="#808080"/>
<rect x="79" y="528" width="3" height="1" fill="#808080"/>
<rect x="81" y="539" width="1" height="1" fill="#808080"/>
<rect x="81" y="550" width="1" height="1" fill="#808080"/>
<rect x="81" y="560" width="1" height="1" fill="#808080"/>
<rect x="79" y="571" width="3" height="1" fill="#808080"/>
<rect x="81" y="582" width="1" height="1" fill="#808080"/>
<rect x="81" y="593" width="1" height="1" fill="#808080"/>
<rect x="81" y="604" width="1" height="1" fill="#808080"/>
<rect x="79" y="615" width="3" height="1" fill="#808080"/>
<rect x="81" y="625" width="1" height="1" fill="#808080"/>
<rect x="81" y="636" width="1" height="1" fill="#808080"/>
<rect x="81" y="647" width="1" height="1" fill="#808080"/>
<rect x="79" y="658" width="3" height="1" fill="#808080"/>
<rect x="83" y="659" width="1" height="4" fill="#808080"/>
<rect x="114" y="659" width="1" height="2" fill="#808080"/>
<rect x="145" y="659" width="1" height="2" fill="#808080"/>
<rect x="176" y="659" width="1" height="2" fill="#808080"/>
<rect x="207" y="659" width="1" height="4" fill="#808080"/>
<rect x="238" y="659" width="1" height="2" fill="#808080"/>
<rect x="269" y="659" width="1" height="2" fill="#808080"/>
<rect x="299" y="659" width="1" height="2" fill="#808080"/>
<rect x="330" y="659" width="1" height="4" fill="#808080"/>
<rect x="361" y="659" width="1" height="2" fill="#808080"/>
<rect x="392" y="659" width="1" height="2" fill="#808080"/>
<rect x="423" y="659" width="1" height="2" fill="#808080"/>
<rect x="454" y="659" width="1" height="4" fill="#808080"/>
<rect x="485" y="659" width="1" height="2" fill="#808080"/>
<rect x="516" y="659" width="1" height="2" fill="#808080"/>
<rect x="547" y="659" width="1" height="2" fill="#808080"/>
<rect x="578" y="659" width="1" height="4" fill="#808080"/>
<rect x="609" y="659" width="1" height="2" fill="#808080"/>
<rect x="640" y="659" width="1" height="2" fill="#808080"/>
<rect x="671" y="659" width="1" height="2" fill="#808080"/>
<rect x="702" y="659" width="1" height="4" fill="#808080"/>
<rect x="732" y="659" width="1" height="2" fill="#808080"/>
<rect x="763" y="659" width="1" height="2" fill="#808080"/>
<rect x="794" y="659" width="1" height="2" fill="#808080"/>
<rect x="825" y="659" width="1" height="4" fill="#808080"/>
<rect x="856" y="659" width="1" height="2" fill="#808080"/>
<rect x="887" y="659" width="1" height="2" fill="#808080"/>
<rect x="918" y="659" width="1" height="2" fill="#808080"/>
<rect x="949" y="659" width="1" height="4" fill="#808080"/>
<rect x="980" y="659" width="1" height="2" fill="#808080"/>
<rect x="1011" y="659" width="1" height="2" fill="#808080"/>
<rect x="1042" y="659" width="1" height="2" fill="#808080"/>
<rect x="1073" y="659" width="1" height="4" fill="#808080"/>
<rect x="1104" y="659" width="1" height="2" fill="#808080"/>
<rect x="1134" y="659" width="1" height="2" fill="#808080"/>
<rect x="1165" y="659" width="1" height="2" fill="#808080"/>
<rect x="1196" y="659" width="1" height="4" fill="#808080"/>
<rect x="1227" y="659" width="1" height="2" fill="#808080"/>
<rect x="1258" y="659" width="1" height="2" fill="#808080"/>
<rect x="1289" y="659" width="1" height="2" fill="#808080"/>
<rect x="1320" y="659" width="1" height="4" fill="#808080"/>
<text x="76" y="229" text-anchor="end" font-family="Liberation Sans" font-weight="bold" font-size="14" letter-spacing="-0.45" fill="#0000ff">110.0</text>
<text x="76" y="273" text-anchor="end" font-family="Liberation Sans" font-weight="bold" font-size="14" letter-spacing="-0.45" fill="#0000ff">109.0</text>
<text x="76" y="316" text-anchor="end" font-family="Liberation Sans" font-weight="bold" font-size="14" letter-spacing="-0.45" fill="#0000ff">108.0</text>
<text x="76" y="360" text-anchor="end" font-family="Liberation Sans" font-weight="bold" font-size="14" letter-spacing="-0.45" fill="#0000ff">107.0</text>
<text x="76" y="403" text-anchor="end" font-family="Liberation Sans" font-weight="bold" font-size="14" letter-spacing="-0.45" fill="#0000ff">106.0</text>
<text x="76" y="446" text-anchor="end" font-family="Liberation Sans" font-weight="bold" font-size="14" letter-spacing="-0.45" fill="#0000ff">105.0</text>
<text x="76" y="490" text-anchor="end" font-family="Liberation Sans" font-weight="bold" font-size="14" letter-spacing="-0.45" fill="#0000ff">104.0</text>
<text x="76" y="533" text-anchor="end" font-family="Liberation Sans" font-weight="bold" font-size="14" letter-spacing="-0.45" fill="#0000ff">103.0</text>
<text x="76" y="577" text-anchor="end" font-family="Liberation Sans" font-weight="bold" font-size="14" letter-spacing="-0.45" fill="#0000ff">102.0</text>
<text x="76" y="620" text-anchor="end" font-family="Liberation Sans" font-weight="bold" font-size="14" letter-spacing="-0.45" fill="#0000ff">101.0</text>
<text x="76" y="663" text-anchor="end" font-family="Liberation Sans" font-weight="bold" font-size="14" letter-spacing="-0.45" fill="#0000ff">100.0</text>
<text x="83.0" y="677.6" text-anchor="middle" font-family="Liberation Sans" font-weight="bold" font-size="14" letter-spacing="-0.45" fill="#000">0</text>
<text x="206.7" y="677.6" text-anchor="middle" font-family="Liberation Sans" font-weight="bold" font-size="14" letter-spacing="-0.45" fill="#000">5.998</text>
<text x="330.4" y="677.6" text-anchor="middle" font-family="Liberation Sans" font-weight="bold" font-size="14" letter-spacing="-0.45" fill="#000">11.997</text>
<text x="454.1" y="677.6" text-anchor="middle" font-family="Liberation Sans" font-weight="bold" font-size="14" letter-spacing="-0.45" fill="#000">17.995</text>
<text x="577.8" y="677.6" text-anchor="middle" font-family="Liberation Sans" font-weight="bold" font-size="14" letter-spacing="-0.45" fill="#000">23.993</text>
<text x="701.5" y="677.6" text-anchor="middle" font-family="Liberation Sans" font-weight="bold" font-size="14" letter-spacing="-0.45" fill="#000">29.992</text>
<text x="825.2" y="677.6" text-anchor="middle" font-family="Liberation Sans" font-weight="bold" font-size="14" letter-spacing="-0.45" fill="#000">35.99</text>
<text x="948.9" y="677.6" text-anchor="middle" font-family="Liberation Sans" font-weight="bold" font-size="14" letter-spacing="-0.45" fill="#000">41.988</text>
<text x="1072.6" y="677.6" text-anchor="middle" font-family="Liberation Sans" font-weight="bold" font-size="14" letter-spacing="-0.45" fill="#000">47.987</text>
<text x="1196.3" y="677.6" text-anchor="middle" font-family="Liberation Sans" font-weight="bold" font-size="14" letter-spacing="-0.45" fill="#000">53.985</text>
<text x="1320.0" y="677.6" text-anchor="middle" font-family="Liberation Sans" font-weight="bold" font-size="14" letter-spacing="-0.45" fill="#000">59.983</text>
<text x="701" y="694" text-anchor="middle" font-family="Liberation Sans" font-weight="bold" font-size="14" letter-spacing="-0.45" fill="#000">Time [Minutes]</text>
<text x="11" y="208" font-family="Liberation Sans" font-weight="bold" font-size="14" letter-spacing="-0.45" word-spacing="1.6" fill="#0000ff">Channel A [mW]</text>
<rect x="708" y="722" width="190" height="23" fill="#000" opacity="0.25"/>
<rect x="707" y="721" width="190" height="23" fill="#000" opacity="0.6"/>
<rect x="706" y="720" width="190" height="23" fill="#000"/>
<rect x="704.5" y="717.5" width="189" height="23" fill="#fff" stroke="#000" stroke-width="1"/>
<rect x="708" y="722" width="12" height="12" fill="#e4e4e4"/>
<rect x="708" y="722" width="12" height="2" fill="#8a8a8a"/>
<rect x="708" y="722" width="2" height="12" fill="#8a8a8a"/>
<rect x="710" y="724" width="9" height="9" fill="#fff"/>
<path d="M711.5 728L713.5 730.8L717.5 725.5" fill="none" stroke="#000" stroke-width="2.2" stroke-linecap="square"/>
<rect x="725" y="727" width="27" height="2" fill="#0000ff"/>
<text x="758" y="732" font-family="Liberation Sans" font-size="11" fill="#000">A - 100.0mW - 110.0mW</text>
</svg>

<!-- status bar -->
<div class="status"></div>
<div class="abs" style="left:1292px;top:772px;width:1px;height:14px;background:#cfcbd0"></div>
<div class="txt" style="left:1298px;top:773px">StarLab</div>
<div class="abs" style="left:0;top:788px;width:1362px;height:1px;background:#d2cfd6"></div>
</body></html>
